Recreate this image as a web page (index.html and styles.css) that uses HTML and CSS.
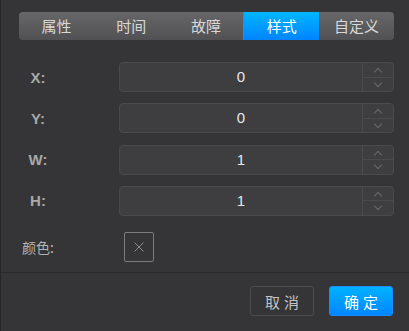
FILE: index.html
```html
<!DOCTYPE html>
<html lang="zh">
<head>
  <meta charset="UTF-8">
  <title>样式</title>
  <link rel="stylesheet" href="styles.css">
</head>
<body>
  <div class="dialog">
    <ul class="tabs">
      <li>属性</li>
      <li>时间</li>
      <li>故障</li>
      <li class="active">样式</li>
      <li>自定义</li>
    </ul>

    <div class="form">
      <div class="row">
        <label class="label">X:</label>
        <div class="spin">
          <span class="value">0</span>
          <div class="arrows">
            <span class="up"></span>
            <span class="down"></span>
          </div>
        </div>
      </div>
      <div class="row">
        <label class="label">Y:</label>
        <div class="spin">
          <span class="value">0</span>
          <div class="arrows">
            <span class="up"></span>
            <span class="down"></span>
          </div>
        </div>
      </div>
      <div class="row">
        <label class="label">W:</label>
        <div class="spin">
          <span class="value">1</span>
          <div class="arrows">
            <span class="up"></span>
            <span class="down"></span>
          </div>
        </div>
      </div>
      <div class="row">
        <label class="label">H:</label>
        <div class="spin">
          <span class="value">1</span>
          <div class="arrows">
            <span class="up"></span>
            <span class="down"></span>
          </div>
        </div>
      </div>
      <div class="row color-row">
        <label class="label cn">颜色:</label>
        <div class="swatch">
          <svg width="10" height="10" viewBox="0 0 10 10">
            <path d="M0.5 0.5 L9.5 9.5 M9.5 0.5 L0.5 9.5" stroke="#8a8a8a" stroke-width="1" fill="none"/>
          </svg>
        </div>
      </div>
    </div>

    <div class="footer">
      <button class="btn">取消</button>
      <button class="btn primary">确定</button>
    </div>
  </div>
</body>
</html>
```

FILE: styles.css
```css
html, body {
  margin: 0;
  padding: 0;
  background-color: #353537;
  font-family: 'Liberation Sans', 'Noto Sans CJK SC', sans-serif;
}

.dialog {
  height: 331px;
  border-left: 1px solid #262628;
  display: flex;
  flex-direction: column;
  box-sizing: border-box;
}

.tabs {
  list-style: none;
  margin: 12px 15px 0 18px;
  padding: 0;
  height: 28px;
  display: flex;
  border-radius: 4px;
  overflow: hidden;
  background: linear-gradient(#676769, #515153);
}

.tabs li {
  flex: 1;
  text-align: center;
  line-height: 28px;
  font-size: 15px;
  color: #d8d8d8;
  font-family: 'Noto Sans CJK SC', sans-serif;
}

.tabs li.active {
  color: #ffffff;
  background: linear-gradient(#00b6ff, #0084ff);
  border-left: 1px solid #5a7fa8;
}

.form {
  padding: 22px 15px 0 0;
  display: flex;
  flex-direction: column;
  gap: 11.3px;
}

.row {
  display: flex;
  align-items: center;
}

.label {
  width: 74px;
  text-align: center;
  font-size: 15px;
  font-weight: bold;
  color: #a8a8a8;
  margin-right: 44px;
}

.label.cn {
  font-family: 'Noto Sans CJK SC', sans-serif;
  font-weight: normal;
  font-size: 14px;
  color: #b4b4b4;
}

.spin {
  flex: 1;
  height: 30px;
  box-sizing: border-box;
  border: 1px solid #4a4a4c;
  border-radius: 4px;
  background-color: #3e3e40;
  display: flex;
}

.value {
  flex: 1;
  text-align: center;
  line-height: 28px;
  font-size: 15px;
  color: #e8e8e8;
}

.arrows {
  width: 30px;
  border-left: 1px solid #4a4a4c;
  display: flex;
  flex-direction: column;
}

.arrows span {
  flex: 1;
  position: relative;
}

.arrows .up {
  border-bottom: 1px solid #4a4a4c;
}

.arrows span::after {
  content: '';
  position: absolute;
  left: 50%;
  width: 5px;
  height: 5px;
  border-left: 1px solid #6a6a6c;
  border-top: 1px solid #6a6a6c;
  margin-left: -3px;
}

.arrows .up::after {
  top: 6px;
  transform: rotate(45deg);
}

.arrows .down::after {
  top: 2px;
  transform: rotate(225deg);
}

.color-row {
  margin-top: 5px;
}

.swatch {
  width: 30px;
  height: 30px;
  box-sizing: border-box;
  margin-left: 5px;
  border: 1px solid #7b7b7d;
  border-radius: 2px;
  display: flex;
  align-items: center;
  justify-content: center;
}

.footer {
  margin-top: auto;
  border-top: 1px solid #2a2a2c;
  height: 59px;
  box-sizing: border-box;
  padding: 13px 16px 0 0;
  display: flex;
  justify-content: flex-end;
  gap: 15px;
}

.btn {
  width: 64px;
  height: 30px;
  border: 1px solid #4c4c4e;
  border-radius: 3px;
  background: transparent;
  color: #c4c4c4;
  font-family: 'Noto Sans CJK SC', sans-serif;
  font-size: 15px;
  letter-spacing: 4px;
  padding: 0 0 0 4px;
}

.btn.primary {
  border-color: #1a8cff;
  background: linear-gradient(#00b2ff, #0086ff);
  color: #ffffff;
}
```
